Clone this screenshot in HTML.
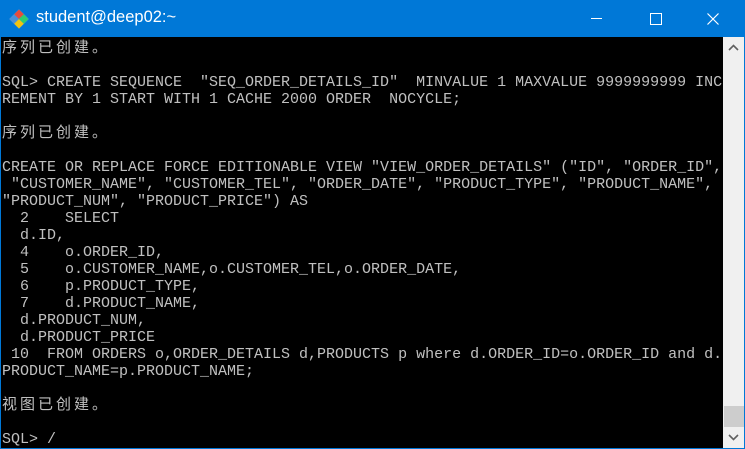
<!DOCTYPE html>
<html><head><meta charset="utf-8"><style>
html,body{margin:0;padding:0;width:745px;height:449px;overflow:hidden;background:#0078d7;}
.title{position:absolute;left:0;top:0;width:745px;height:37px;background:#0078d7;color:#fff;font:16.5px "Liberation Sans",sans-serif;}
.title .t{position:absolute;left:36px;top:8px;}
.term{position:absolute;left:1px;top:37px;width:722px;height:411px;background:#000;overflow:hidden;}
pre{margin:0;position:absolute;left:1px;top:3px;font:15px/17px "Liberation Mono","Noto Sans CJK SC",monospace;color:#c0c0c0;}
.c{letter-spacing:3px;}
.sb{position:absolute;left:723px;top:37px;width:21px;height:411px;background:#f0f0f0;}
.thumb{position:absolute;left:1px;top:369px;width:20px;height:21px;background:#cdcdcd;}
</style></head><body>
<div class="title">
<svg style="position:absolute;left:9px;top:9px" width="20" height="20" viewBox="0 0 20 20">
<rect x="3" y="3" width="14" height="14" transform="rotate(45 10 10)" fill="#4a90d9"/>
<path d="M10 0.5L14.8 5.3L10 10L5.2 5.3Z" fill="#e74c3c"/>
<path d="M10 10L14.8 14.7L10 19.5L5.2 14.7Z" fill="#f1c40f"/>
<path d="M10 10L14.8 5.3L19.5 10L14.8 14.7Z" fill="#2ecc71"/>
</svg>
<span class="t">student@deep02:~</span>
<div style="position:absolute;left:591px;top:18px;width:11px;height:1px;background:#fff"></div>
<div style="position:absolute;left:650px;top:13px;width:10px;height:10px;border:1px solid #fff"></div>
<svg style="position:absolute;left:707px;top:13px" width="12" height="12"><path d="M0.5 0.5L11.5 11.5M11.5 0.5L0.5 11.5" stroke="#fff" stroke-width="1.2"/></svg>
</div>
<div class="term"><pre><span class="c">序列已创建。</span>

SQL&gt; CREATE SEQUENCE  "SEQ_ORDER_DETAILS_ID"  MINVALUE 1 MAXVALUE 9999999999 INC
REMENT BY 1 START WITH 1 CACHE 2000 ORDER  NOCYCLE;

<span class="c">序列已创建。</span>

CREATE OR REPLACE FORCE EDITIONABLE VIEW "VIEW_ORDER_DETAILS" ("ID", "ORDER_ID",
 "CUSTOMER_NAME", "CUSTOMER_TEL", "ORDER_DATE", "PRODUCT_TYPE", "PRODUCT_NAME",
"PRODUCT_NUM", "PRODUCT_PRICE") AS
  2    SELECT
  d.ID,
  4    o.ORDER_ID,
  5    o.CUSTOMER_NAME,o.CUSTOMER_TEL,o.ORDER_DATE,
  6    p.PRODUCT_TYPE,
  7    d.PRODUCT_NAME,
  d.PRODUCT_NUM,
  d.PRODUCT_PRICE
 10  FROM ORDERS o,ORDER_DETAILS d,PRODUCTS p where d.ORDER_ID=o.ORDER_ID and d.
PRODUCT_NAME=p.PRODUCT_NAME;

<span class="c">视图已创建。</span>

SQL&gt; /</pre></div>
<div class="sb">
<svg style="position:absolute;left:5px;top:7px" width="11" height="7"><path d="M1 6L5.5 1.5L10 6" stroke="#606060" stroke-width="1.6" fill="none"/></svg>
<div class="thumb"></div>
<svg style="position:absolute;left:5px;top:397px" width="11" height="7"><path d="M1 1L5.5 5.5L10 1" stroke="#606060" stroke-width="1.6" fill="none"/></svg>
</div>
</body></html>
